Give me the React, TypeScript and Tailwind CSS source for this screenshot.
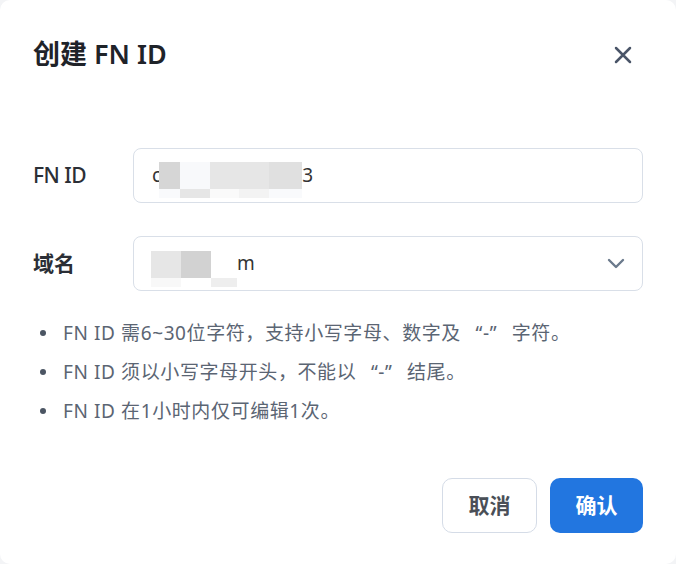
const font = { fontFamily: '"Noto Sans", "Noto Sans CJK SC", sans-serif' };

// 全角引号：中文弯引号在参考图里占满一个字宽
function Q({ c }: { c: "“" | "”" }) {
  return (
    <span className={c === "“" ? "inline-block w-[22px] text-right" : "inline-block w-[22px] text-left"}>{c}</span>
  );
}

const tips = [
  <>FN ID 需6~30位字符，支持小写字母、数字及<Q c="“" />-<Q c="”" />字符。</>,
  <>FN ID 须以小写字母开头，不能以<Q c="“" />-<Q c="”" />结尾。</>,
  <>FN ID 在1小时内仅可编辑1次。</>,
];

function Blur({ top, bottom }: { top: string[]; bottom: string[] }) {
  return (
    <span className="inline-flex flex-col align-middle">
      <span className="flex h-[27px]">
        {top.map((c, i) => (
          <span key={i} className="h-full" style={{ background: c.split("|")[0], width: Number(c.split("|")[1]) }} />
        ))}
      </span>
      <span className="flex h-[9px]">
        {bottom.map((c, i) => (
          <span key={i} className="h-full" style={{ background: c.split("|")[0], width: Number(c.split("|")[1]) }} />
        ))}
      </span>
    </span>
  );
}

export default function App() {
  return (
    <div className="h-[564px] w-[676px] bg-[#f3f4f6]" style={font}>
      <div className="flex h-full w-full flex-col rounded-[10px] bg-white px-[33px]">
        <div className="flex h-[112px] items-center justify-between pb-[3px]">
          <h1 className="text-[27px] font-semibold text-[#1f2329]">创建 FN ID</h1>
          <svg className="mr-[11px]" width="18" height="18" viewBox="0 0 18 18" fill="none" stroke="#4a5568" strokeWidth="2.5" strokeLinecap="round">
            <path d="M2 2 16 16M16 2 2 16" />
          </svg>
        </div>

        <div className="flex flex-col gap-[33px] pt-[36px]">
          <div className="flex items-center">
            <label className="w-[100px] text-[21px] font-medium tracking-[-0.5px] text-[#2b2f36]">FN ID</label>
            <div className="flex h-[55px] flex-1 items-center rounded-[8px] border border-[#d9dfe8] pl-[18px] text-[19px] text-[#333]">
              <span>c</span>
              <span className="-ml-[2px] mt-[9px]">
                <Blur
                  top={["#d6d6d6|21", "#f8f9fb|30", "#e6e6e6|29", "#e6e6e6|30", "#e0e0e0|33"]}
                  bottom={["#f9fafc|21", "#e6e6e6|30", "#fafafa|29", "#f3f3f3|30", "#f9fafc|33"]}
                />
              </span>
              <span>3</span>
            </div>
          </div>

          <div className="flex items-center">
            <label className="w-[100px] text-[21px] font-bold text-[#2b2f36]">域名</label>
            <div className="flex h-[55px] flex-1 items-center rounded-[8px] border border-[#d9dfe8] pl-[17px] pr-[17px] text-[19px] text-[#333]">
              <span className="mt-[10px]">
                <Blur top={["#e6e6e6|30", "#d2d2d2|30", "#ffffff|26"]} bottom={["#f8f8f8|30", "#ffffff|30", "#eeeeee|26"]} />
              </span>
              <span>m</span>
              <svg className="ml-auto" width="18" height="11" viewBox="0 0 18 11" fill="none" stroke="#6b7a8c" strokeWidth="2.4" strokeLinecap="round" strokeLinejoin="round">
                <path d="M2 2 9 9 16 2" />
              </svg>
            </div>
          </div>
        </div>

        <ul className="mt-[29px] flex flex-col gap-[13px]">
          {tips.map((t, i) => (
            <li key={i} className="flex items-center whitespace-nowrap text-[19px] leading-[26px] tracking-[0.6px] text-[#5b6573]">
              <span className="ml-[7px] mr-[17px] h-[6px] w-[6px] shrink-0 rounded-full bg-[#4b5563]" />
              <span>{t}</span>
            </li>
          ))}
        </ul>

        <div className="mt-auto mb-[31px] flex justify-end gap-[13px]">
          <button className="h-[55px] w-[95px] rounded-[10px] border border-[#d5dce7] bg-white text-[21px] font-bold text-[#4a4f57]">
            取消
          </button>
          <button className="h-[55px] w-[93px] rounded-[10px] bg-[#2276e0] text-[21px] font-bold text-white">
            确认
          </button>
        </div>
      </div>
    </div>
  );
}
